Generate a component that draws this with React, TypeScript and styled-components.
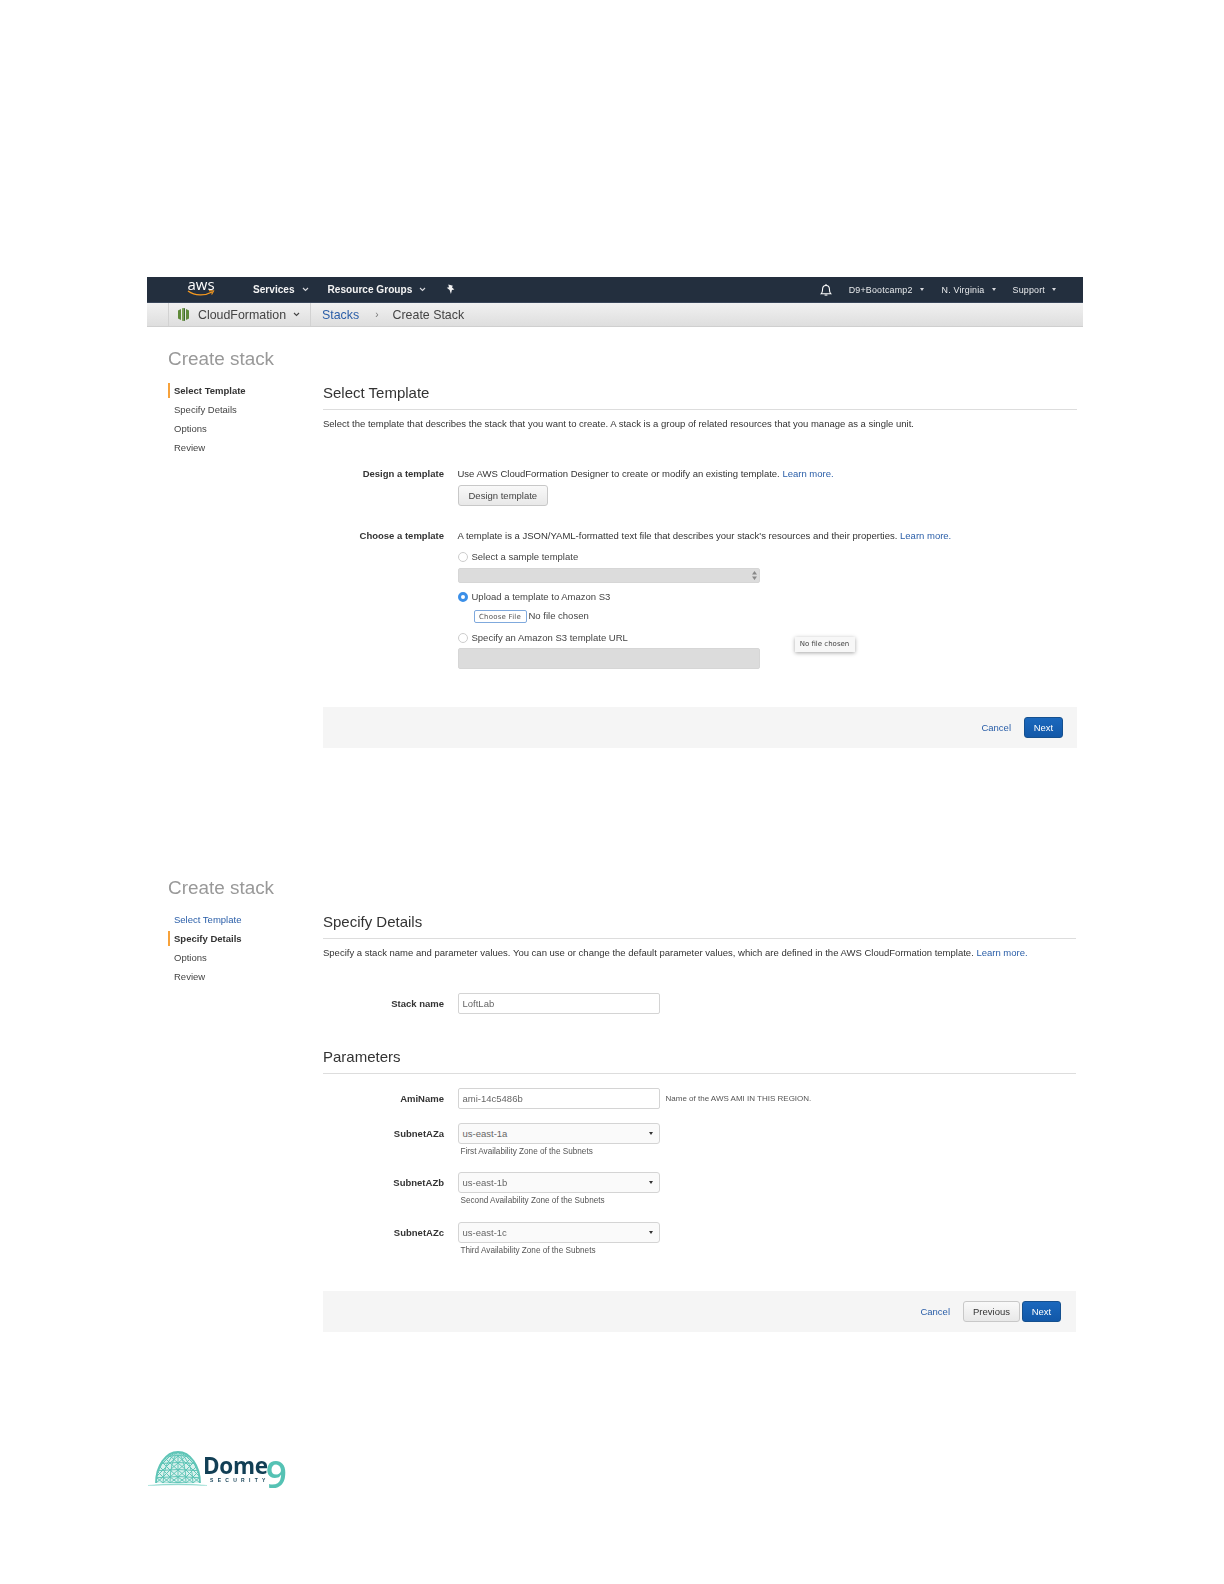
import React from "react";
import styled, {createGlobalStyle} from "styled-components";

const GlobalStyle = createGlobalStyle`
  html, body {
    margin: 0;
    padding: 0;
    background: #fff;
  }
  body {
    font-family: "Liberation Sans", Arial, sans-serif;
    color: #333;
  }
`;

const Page = styled.div`
  width: 1224px;
  height: 1584px;
  box-sizing: border-box;
  padding: 277px 0 0 147px;
  overflow: hidden;
  filter: blur(0.4px);
`;

const TopNav = styled.div`
  width: 936px;
  height: 26px;
  box-sizing: border-box;
  background: #232f3e;
  border-bottom: 1px solid #39465a;
  display: flex;
  align-items: center;
  color: #fff;
`;

const AwsLogo = styled.div`
  width: 34px;
  margin-left: 37px;
  display: flex;
  flex-direction: column;
  align-items: center;
  color: #fff;
  font-family: "Open Sans", sans-serif;
  font-size: 15px;
  line-height: 12px;
  height: 21px;
  margin-top: -3px;
`;

const NavMenu = styled.span<{$gap: number}>`
  display: flex;
  align-items: center;
  font-size: 10.1px;
  font-weight: 700;
  color: #f4f4f4;
  margin-left: ${({$gap}) => $gap}px;
`;

const NavCaret = styled.svg`
  width: 7px;
  height: 5px;
  margin-left: 7px;
`;

const RightNav = styled.div`
  margin-left: auto;
  margin-right: 27px;
  display: flex;
  align-items: center;
`;

const AccountItem = styled.span<{$gap: number}>`
  display: flex;
  align-items: center;
  font-size: 8.9px;
  letter-spacing: 0.2px;
  color: #e8eaec;
  margin-left: ${({$gap}) => $gap}px;
`;

const SmallCaret = styled.span`
  width: 0;
  height: 0;
  margin-left: 7px;
  border-left: 2.5px solid transparent;
  border-right: 2.5px solid transparent;
  border-top: 3px solid #d8dade;
`;

const SubNav = styled.div`
  width: 936px;
  height: 24px;
  box-sizing: border-box;
  background: linear-gradient(#f1f1f1, #dedede);
  border-bottom: 1px solid #cfcfcf;
  display: flex;
  align-items: center;
  font-size: 12.4px;
  color: #444;
`;

const ServiceBlock = styled.div`
  width: 143px;
  height: 100%;
  margin-left: 21px;
  box-sizing: border-box;
  padding-left: 9px;
  display: flex;
  align-items: center;
  border-left: 1px solid #d2d2d2;
  border-right: 1px solid #d2d2d2;
`;

const ServiceName = styled.span`
  margin-left: 9px;
`;

const Crumb = styled.span`
  color: #2a5ea8;
  margin-left: 11px;
`;

const CrumbSep = styled.span`
  margin: 0 14px 0 16px;
  font-size: 10px;
  color: #777;
`;

const Wizard = styled.div<{$top: number; $width: number}>`
  width: ${({$width}) => $width}px;
  margin: ${({$top}) => $top}px 0 0 21px;
`;

const Title = styled.div`
  font-size: 18.9px;
  line-height: 24px;
  color: #999;
`;

const WizardBody = styled.div`
  display: grid;
  grid-template-columns: 155px 1fr;
  margin-top: 10px;
`;

const Steps = styled.div`
  display: flex;
  flex-direction: column;
`;

const Step = styled.div<{$active?: boolean; $done?: boolean}>`
  height: 19px;
  line-height: 15px;
  box-sizing: border-box;
  padding: 2px 0 0 4px;
  border-left: 2px solid transparent;
  font-size: 9.5px;
  color: ${({$done}) => ($done ? "#2a5ea8" : "#444")};
  ${({$active}) =>
    $active &&
    `
    font-weight: 700;
    color: #333;
    border-image: linear-gradient(#f7a23b, #f7a23b) 1;
    height: 15px;
    margin: 2px 0;
    padding-top: 0;
  `}
`;

const Main = styled.div`
  display: flex;
  flex-direction: column;
`;

const Heading = styled.div<{$top?: number}>`
  font-size: 15px;
  line-height: 20px;
  color: #333;
  padding-bottom: 6px;
  border-bottom: 1px solid #ddd;
  margin-top: ${({$top}) => $top ?? 2}px;
`;

const Intro = styled.div`
  font-size: 9.5px;
  line-height: 14px;
  margin-top: 7px;
  white-space: nowrap;
`;

const Link = styled.span`
  color: #2a5ea8;
`;

const Row = styled.div<{$top: number}>`
  display: grid;
  grid-template-columns: 121px 1fr;
  column-gap: 13.5px;
  margin-top: ${({$top}) => $top}px;
`;

const RowLabel = styled.div`
  font-size: 9.5px;
  font-weight: 700;
  line-height: 14px;
  text-align: right;
  color: #333;
`;

const CenteredLabel = styled(RowLabel)`
  line-height: 21px;
`;

const RowValue = styled.div`
  display: flex;
  flex-direction: column;
  align-items: flex-start;
  font-size: 9.5px;
  line-height: 14px;
  white-space: nowrap;
`;

const Button = styled.div`
  height: 21px;
  line-height: 20px;
  box-sizing: border-box;
  padding: 0 10px;
  font-size: 9.5px;
  color: #444;
  background: linear-gradient(#f9f9f9, #e8e8e8);
  border: 1px solid #c8c8c8;
  border-radius: 3px;
`;

const DesignButton = styled(Button)`
  margin-top: 4px;
`;

const RadioRow = styled.div<{$top: number}>`
  display: flex;
  align-items: center;
  margin-top: ${({$top}) => $top}px;
  color: #444;
`;

const Radio = styled.span<{$checked?: boolean}>`
  width: 10px;
  height: 10px;
  box-sizing: border-box;
  margin-right: 4px;
  border-radius: 50%;
  border: ${({$checked}) => ($checked ? "3px solid #3b8fe8" : "1px solid #ccc")};
  background: #fff;
`;

const DisabledSelect = styled.div`
  width: 302px;
  height: 15px;
  box-sizing: border-box;
  margin-top: 4px;
  padding-right: 2px;
  display: flex;
  align-items: center;
  justify-content: flex-end;
  background: #dcdcdc;
  border-radius: 2px;
  border: 1px solid #d6d6d6;
`;

const StepperIcon = styled.svg`
  width: 5px;
  height: 9px;
`;

const FileRow = styled.div`
  display: flex;
  align-items: center;
  margin: 4px 0 0 16px;
  color: #444;
`;

const ChooseFile = styled.div`
  width: 53px;
  height: 13px;
  line-height: 12px;
  box-sizing: border-box;
  margin: 2px 2px 0 0;
  text-align: center;
  font-family: "DejaVu Sans", sans-serif;
  font-size: 7px;
  letter-spacing: 0.2px;
  color: #555;
  background: #fff;
  border: 1px solid #7fa9dd;
  border-radius: 2px;
`;

const DisabledInput = styled.div`
  width: 302px;
  height: 21px;
  box-sizing: border-box;
  margin-top: 3px;
  background: #dcdcdc;
  border: 1px solid #d6d6d6;
  border-radius: 2px;
`;

const UrlArea = styled.div`
  position: relative;
`;

const FileTooltip = styled.div`
  position: absolute;
  left: 337px;
  top: 14px;
  width: 60px;
  height: 15px;
  line-height: 15px;
  box-sizing: border-box;
  text-align: center;
  font-family: "DejaVu Sans", sans-serif;
  font-size: 7px;
  color: #444;
  background: #f7f7f7;
  box-shadow: 0 1px 4px rgba(0, 0, 0, 0.35);
`;

const Footer = styled.div<{$top: number; $right: number}>`
  height: 41px;
  box-sizing: border-box;
  margin-top: ${({$top}) => $top}px;
  padding-right: ${({$right}) => $right}px;
  display: flex;
  align-items: center;
  justify-content: flex-end;
  background: #f5f5f5;
`;

const CancelLink = styled(Link)`
  font-size: 9.5px;
  margin-right: 13px;
`;

const PreviousButton = styled(Button)`
  width: 57px;
  padding: 0;
  text-align: center;
  margin-right: 2px;
  color: #333;
`;

const NextButton = styled.div`
  width: 39px;
  height: 21px;
  line-height: 20px;
  box-sizing: border-box;
  text-align: center;
  font-size: 9.5px;
  color: #fff;
  background: linear-gradient(#1b68bd, #1258a8);
  border: 1px solid #15508f;
  border-radius: 3px;
`;

const TextField = styled.div`
  width: 202px;
  height: 21px;
  line-height: 19px;
  box-sizing: border-box;
  padding-left: 4px;
  font-size: 9.5px;
  color: #666;
  background: #fff;
  border: 1px solid #d4d4d4;
  border-radius: 2px;
`;

const InlineField = styled.div`
  display: flex;
  align-items: center;
`;

const FieldHint = styled.span`
  margin-left: 6px;
  font-size: 8px;
  color: #555;
`;

const SelectField = styled(TextField)`
  position: relative;
  background: #fafafa;
  border-radius: 3px;
`;

const SelectCaret = styled.span`
  position: absolute;
  right: 6px;
  top: 8px;
  width: 0;
  height: 0;
  border-left: 2.5px solid transparent;
  border-right: 2.5px solid transparent;
  border-top: 3px solid #333;
`;

const SelectHint = styled.div`
  margin: 2px 0 0 3px;
  font-size: 8.2px;
  line-height: 12px;
  color: #555;
`;

const Logo = styled.div`
  margin: 118px 0 0 1px;
  display: flex;
  align-items: flex-start;
`;

const DomeIcon = styled.svg`
  width: 60px;
  height: 36px;
  flex: none;
`;

const LogoWord = styled.div`
  margin-left: -5px;
  display: flex;
  flex-direction: column;
  color: #123f55;
`;

const LogoName = styled.span`
  font-family: "Open Sans", sans-serif;
  font-size: 22.5px;
  font-weight: 700;
  line-height: 24px;
  margin-top: 4px;
  letter-spacing: -0.3px;
`;

const LogoTag = styled.span`
  font-size: 5px;
  line-height: 6px;
  font-weight: 700;
  letter-spacing: 4.3px;
  margin: -1px 0 0 7px;
`;

const LogoNine = styled.span`
  font-family: "Open Sans", sans-serif;
  font-size: 37px;
  font-weight: 600;
  line-height: 36px;
  margin: 6px 0 0 -4px;
  color: #55c2b4;
`;

const Caret = ({color = "#d8dade"}: {color?: string}) => (
  <NavCaret viewBox="0 0 7 5">
    <path d="M1 1l2.500 2.500L6 1" fill="none" stroke={color} strokeWidth="1.100" />
  </NavCaret>
);

const AwsSmile = () => (
  <svg width="28" height="7" viewBox="0 0 28 7">
    <path d="M1 1c7 5 17 5 24 1" fill="none" stroke="#f79a1f" strokeWidth="1.300" />
    <path d="M22 .6l4.600.4-2 3.600" fill="none" stroke="#f79a1f" strokeWidth="1.100" />
  </svg>
);

const PinIcon = () => (
  <svg width="11" height="11" viewBox="0 0 10 10" style={{marginLeft: 19}}>
    <path d="M3 .5l4.200 1.200-.9 1.300 2.200 1.900-2.200.5L5.400 9 4.200 5.400 1.600 3.400 3.600 3z" fill="#f1f1f1" />
  </svg>
);

const BellIcon = () => (
  <svg width="14" height="14" viewBox="0 0 13 13">
    <path
      d="M2 10c1-1 1.300-2 1.300-4 0-2 1.300-3.600 3.200-3.600S9.700 4 9.700 6c0 2 .3 3 1.300 4z"
      fill="none"
      stroke="#fff"
      strokeWidth="1"
    />
    <path d="M5.200 11.200h2.600" stroke="#fff" strokeWidth="1" />
    <path d="M6.500 1v1.400" stroke="#fff" strokeWidth="1" />
  </svg>
);

const CloudFormationIcon = () => (
  <svg width="11" height="13" viewBox="0 0 11 13">
    <path d="M0 2.500l3-1.500v11l-3-1.500z" fill="#5f8a3a" />
    <path d="M11 2.500L8 1v11l3-1.500z" fill="#5f8a3a" />
    <path d="M4 .3l1.500-.3v13L4 12.700z" fill="#7aa64a" />
    <path d="M7 .3L5.500 0v13L7 12.700z" fill="#3f6a2a" />
  </svg>
);

const DomeLogo = () => {
  const columns = [8, 15, 22, 30, 38, 45, 52];
  const rows = [6, 13, 20, 27, 33];
  return (
    <DomeIcon viewBox="0 0 60 36">
      <defs>
        <clipPath id="dome-clip">
          <path d="M8 33a22 31 0 0 1 44 0z" />
        </clipPath>
      </defs>
      <path d="M8 33a22 31 0 0 1 44 0z" fill="#d8f1ed" />
      <g clipPath="url(#dome-clip)" fill="none" stroke="#5fc5b7" strokeWidth="1">
        {columns.map((x) => (
          <path key={x} d={`M30 1Q${x} 12 ${x} 33`} />
        ))}
        {rows.map((y) => (
          <path key={y} d={`M4 ${y + 1}Q30 ${y - 2} 56 ${y + 1}`} />
        ))}
        {rows.slice(0, -1).map((y, i) =>
          columns.slice(0, -1).map((x, j) => (
            <React.Fragment key={`${i}-${j}`}>
              <path d={`M${x} ${y}L${columns[j + 1]} ${rows[i + 1]}`} />
              <path d={`M${columns[j + 1]} ${y}L${x} ${rows[i + 1]}`} />
            </React.Fragment>
          ))
        )}
      </g>
      <path d="M8 33a22 31 0 0 1 44 0" fill="none" stroke="#5fc5b7" strokeWidth="1.800" />
      <path d="M0 35.500Q30 32 59 35.500Q30 34 0 35.500z" fill="#62c6b8" stroke="#a5e0d8" strokeWidth="0.600" />
    </DomeIcon>
  );
};

const Stepper = () => (
  <StepperIcon viewBox="0 0 5 9">
    <path d="M2.500 0L5 3.500H0zM2.500 9L0 5.500h5z" fill="#888" />
  </StepperIcon>
);

const subnets = [
  {name: "SubnetAZa", value: "us-east-1a", hint: "First Availability Zone of the Subnets", top: 14},
  {name: "SubnetAZb", value: "us-east-1b", hint: "Second Availability Zone of the Subnets", top: 14},
  {name: "SubnetAZc", value: "us-east-1c", hint: "Third Availability Zone of the Subnets", top: 15},
];

const App = () => {
  return (
    <>
      <GlobalStyle />
      <Page>
        <TopNav>
          <AwsLogo>
            aws
            <AwsSmile />
          </AwsLogo>
          <NavMenu $gap={35}>
            Services
            <Caret />
          </NavMenu>
          <NavMenu $gap={19}>
            Resource Groups
            <Caret />
          </NavMenu>
          <PinIcon />
          <RightNav>
            <BellIcon />
            <AccountItem $gap={16}>
              D9+Bootcamp2
              <SmallCaret />
            </AccountItem>
            <AccountItem $gap={18}>
              N. Virginia
              <SmallCaret />
            </AccountItem>
            <AccountItem $gap={17}>
              Support
              <SmallCaret />
            </AccountItem>
          </RightNav>
        </TopNav>
        <SubNav>
          <ServiceBlock>
            <CloudFormationIcon />
            <ServiceName>CloudFormation</ServiceName>
            <Caret color="#444" />
          </ServiceBlock>
          <Crumb>Stacks</Crumb>
          <CrumbSep>›</CrumbSep>
          Create Stack
        </SubNav>

        <Wizard $top={20} $width={909}>
          <Title>Create stack</Title>
          <WizardBody>
            <Steps>
              <Step $active>Select Template</Step>
              <Step>Specify Details</Step>
              <Step>Options</Step>
              <Step>Review</Step>
            </Steps>
            <Main>
              <Heading>Select Template</Heading>
              <Intro>
                Select the template that describes the stack that you want to create. A stack is a group of related
                resources that you manage as a single unit.
              </Intro>
              <Row $top={36}>
                <RowLabel>Design a template</RowLabel>
                <RowValue>
                  <span>
                    Use AWS CloudFormation Designer to create or modify an existing template. <Link>Learn more.</Link>
                  </span>
                  <DesignButton>Design template</DesignButton>
                </RowValue>
              </Row>
              <Row $top={23}>
                <RowLabel>Choose a template</RowLabel>
                <RowValue>
                  <span>
                    A template is a JSON/YAML-formatted text file that describes your stack's resources and their
                    properties. <Link>Learn more.</Link>
                  </span>
                  <RadioRow $top={7}>
                    <Radio />
                    Select a sample template
                  </RadioRow>
                  <DisabledSelect>
                    <Stepper />
                  </DisabledSelect>
                  <RadioRow $top={7}>
                    <Radio $checked />
                    Upload a template to Amazon S3
                  </RadioRow>
                  <FileRow>
                    <ChooseFile>Choose File</ChooseFile>
                    No file chosen
                  </FileRow>
                  <UrlArea>
                    <RadioRow $top={8}>
                      <Radio />
                      Specify an Amazon S3 template URL
                    </RadioRow>
                    <DisabledInput />
                    <FileTooltip>No file chosen</FileTooltip>
                  </UrlArea>
                </RowValue>
              </Row>
              <Footer $top={38} $right={14}>
                <CancelLink>Cancel</CancelLink>
                <NextButton>Next</NextButton>
              </Footer>
            </Main>
          </WizardBody>
        </Wizard>

        <Wizard $top={128} $width={908}>
          <Title>Create stack</Title>
          <WizardBody>
            <Steps>
              <Step $done>Select Template</Step>
              <Step $active>Specify Details</Step>
              <Step>Options</Step>
              <Step>Review</Step>
            </Steps>
            <Main>
              <Heading>Specify Details</Heading>
              <Intro>
                Specify a stack name and parameter values. You can use or change the default parameter values, which
                are defined in the AWS CloudFormation template. <Link>Learn more.</Link>
              </Intro>
              <Row $top={33}>
                <CenteredLabel>Stack name</CenteredLabel>
                <RowValue>
                  <TextField>LoftLab</TextField>
                </RowValue>
              </Row>
              <Heading $top={33}>Parameters</Heading>
              <Row $top={14}>
                <CenteredLabel>AmiName</CenteredLabel>
                <RowValue>
                  <InlineField>
                    <TextField>ami-14c5486b</TextField>
                    <FieldHint>Name of the AWS AMI IN THIS REGION.</FieldHint>
                  </InlineField>
                </RowValue>
              </Row>
              {subnets.map((s) => (
                <Row key={s.name} $top={s.top}>
                  <CenteredLabel>{s.name}</CenteredLabel>
                  <RowValue>
                    <SelectField>
                      {s.value}
                      <SelectCaret />
                    </SelectField>
                    <SelectHint>{s.hint}</SelectHint>
                  </RowValue>
                </Row>
              ))}
              <Footer $top={34} $right={15}>
                <CancelLink>Cancel</CancelLink>
                <PreviousButton>Previous</PreviousButton>
                <NextButton>Next</NextButton>
              </Footer>
            </Main>
          </WizardBody>
        </Wizard>

        <Logo>
          <DomeLogo />
          <LogoWord>
            <LogoName>Dome</LogoName>
            <LogoTag>SECURITY</LogoTag>
          </LogoWord>
          <LogoNine>9</LogoNine>
        </Logo>
      </Page>
    </>
  );
};

export default App;
